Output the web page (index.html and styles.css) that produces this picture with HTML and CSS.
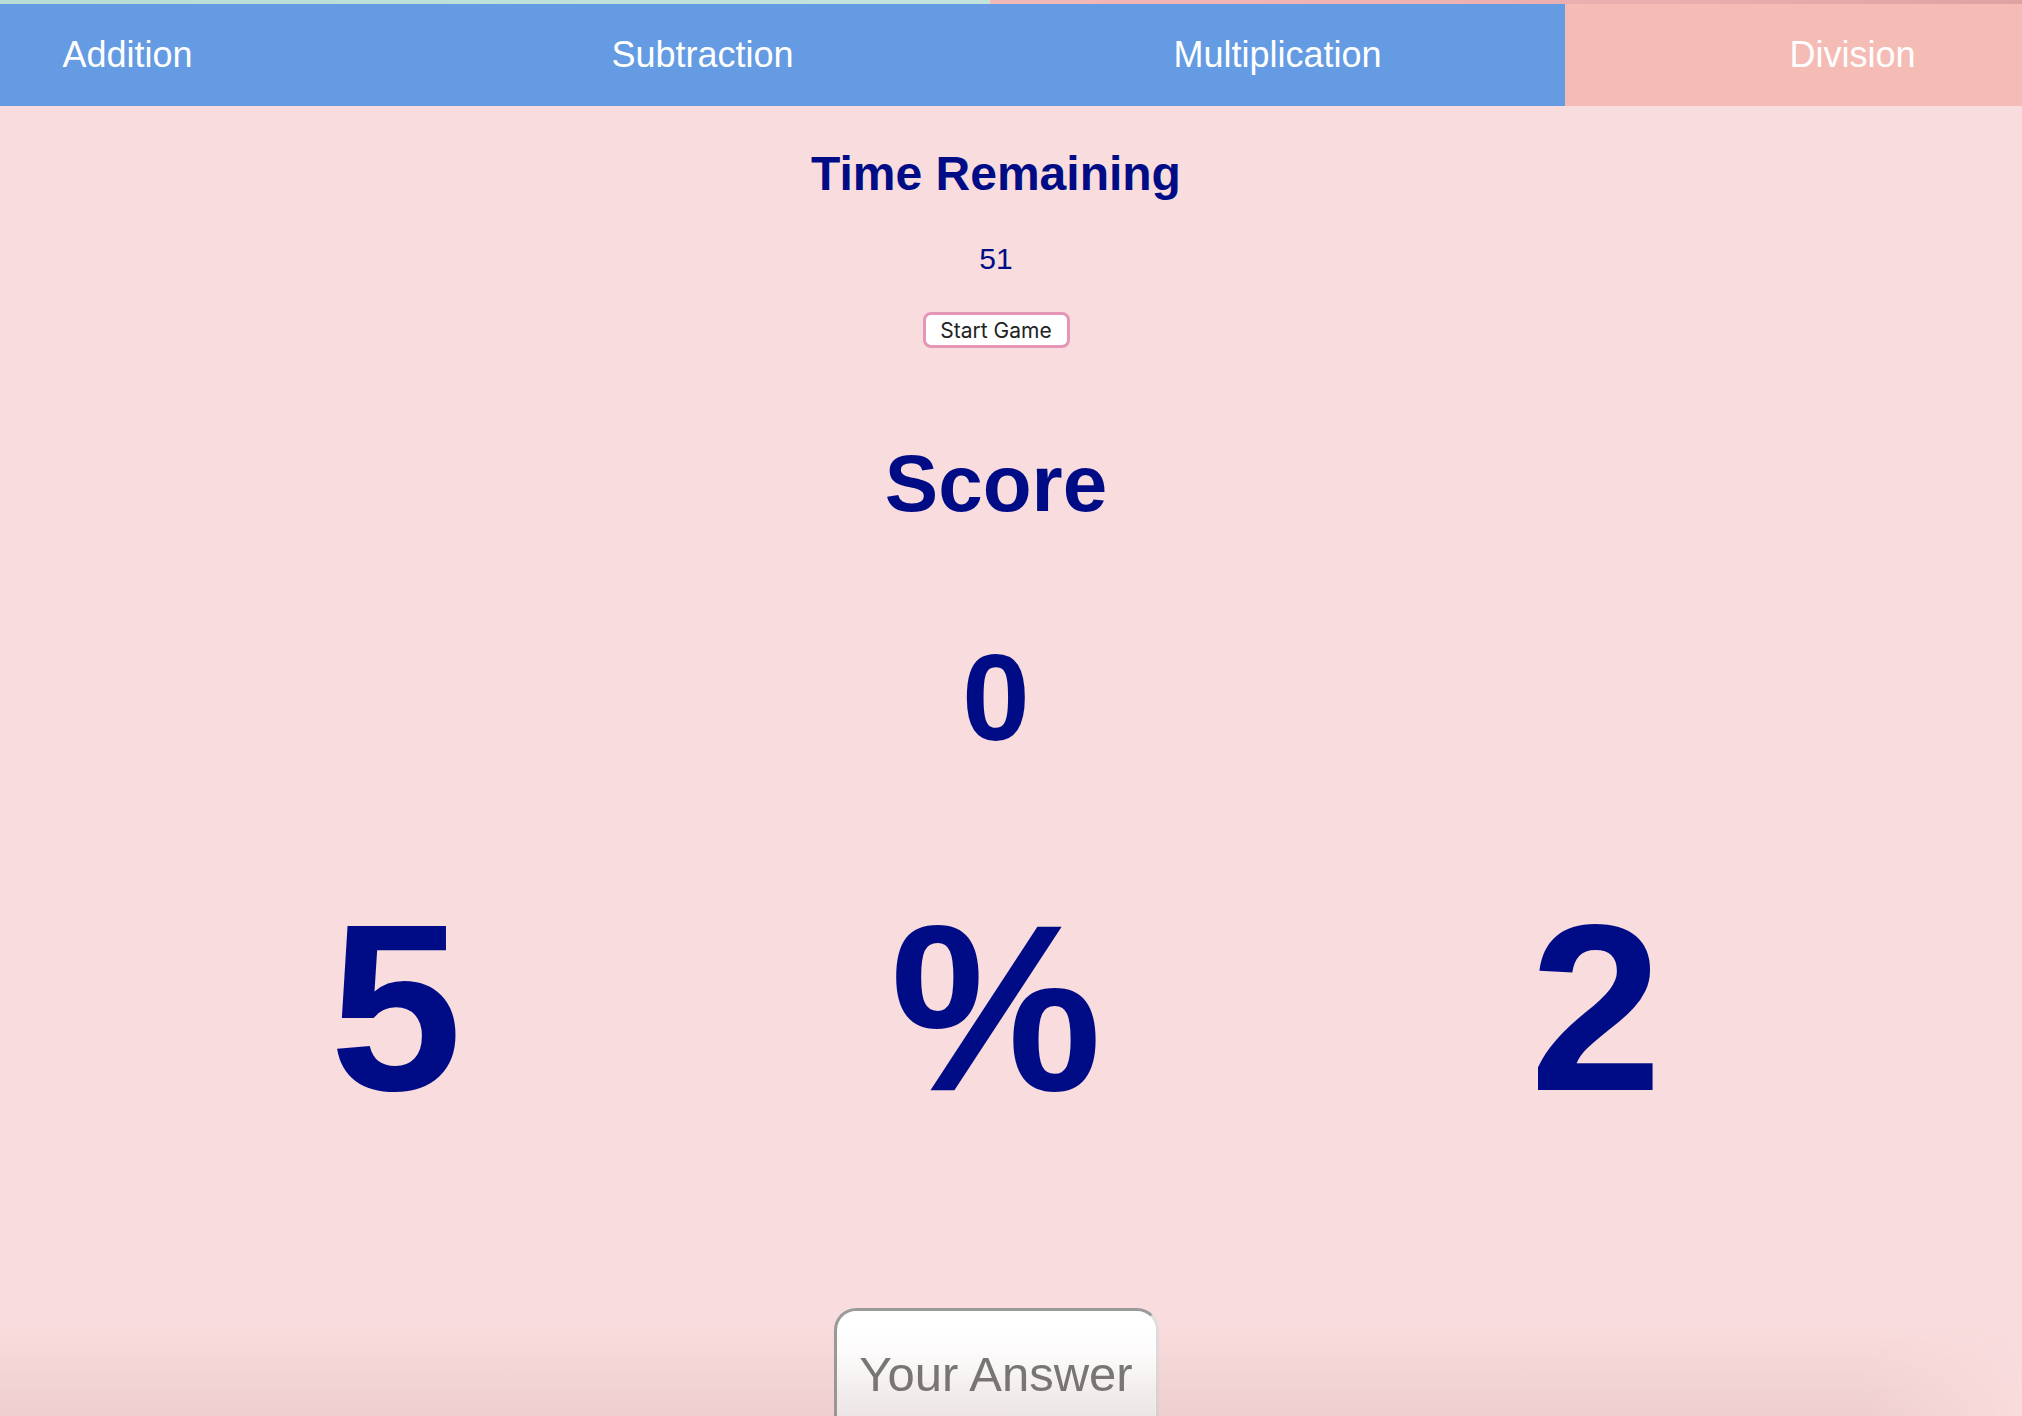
FILE: index.html
```html
<!DOCTYPE html>
<html lang="en">
<head>
<meta charset="utf-8">
<title>Math Game</title>
<link rel="stylesheet" href="styles.css">
</head>
<body>
<div class="strip"><span class="strip-left"></span><span class="strip-right"></span></div>
<nav class="nav">
  <a class="tab">Addition</a>
  <a class="tab">Subtraction</a>
  <a class="tab">Multiplication</a>
  <a class="tab tab-active">Division</a>
</nav>
<main class="main">
  <h1 class="title">Time Remaining</h1>
  <p class="timer">51</p>
  <button class="start">Start Game</button>
  <h2 class="score-title">Score</h2>
  <p class="score">0</p>
  <div class="problem">
    <span class="term">5</span>
    <span class="term">%</span>
    <span class="term">2</span>
  </div>
  <input class="answer" type="text" placeholder="Your Answer">
</main>
<div class="shade"></div>
</body>
</html>
```

FILE: styles.css
```css
html, body {
  margin: 0;
  padding: 0;
}
body {
  background: #f9dcdd;
  font-family: "Liberation Sans", Arial, sans-serif;
  color: #000c86;
  overflow: hidden;
  height: 1416px;
  position: relative;
}
.strip {
  display: flex;
  height: 4px;
}
.strip-left {
  width: 990px;
  background: linear-gradient(to right, #b8dcd5, #c3e4dc);
}
.strip-right {
  flex: 1;
  background: linear-gradient(to right, #f3b9b6, #e9adaf 70%, #dea2a5);
}
.nav {
  display: flex;
  height: 102px;
  margin-left: -160px;
}
.tab {
  flex: 0 0 575px;
  text-align: center;
  line-height: 102px;
  font-size: 36px;
  color: #ffffff;
  background: #659be2;
}
.tab-active {
  background: #f5bcb6;
}
.main {
  width: 1992px;
  display: flex;
  flex-direction: column;
  align-items: center;
  text-align: center;
}
.title {
  margin: 44px 0 0;
  font-size: 48px;
  line-height: 1;
  font-weight: bold;
}
.timer {
  margin: 46px 0 0;
  font-size: 30px;
  line-height: 1;
}
.start {
  margin: 38px 0 0;
  width: 147px;
  height: 36px;
  padding: 0;
  border: 3px solid #e596b7;
  border-radius: 8px;
  background: #ffffff;
  font-family: Inter, "Liberation Sans", sans-serif;
  font-size: 21px;
  color: #222222;
}
.score-title {
  margin: 96px 0 0;
  font-size: 80px;
  line-height: 1;
  font-weight: bold;
}
.score {
  margin: 113px 0 0;
  font-size: 122px;
  line-height: 1;
  font-weight: bold;
}
.problem {
  margin-top: 129px;
  display: grid;
  grid-template-columns: repeat(3, 600px);
  font-size: 238px;
  line-height: 240px;
  font-weight: bold;
}
.term {
  text-align: center;
}
.answer {
  margin-top: 180px;
  box-sizing: border-box;
  width: 325px;
  height: 132px;
  padding: 0 14px;
  border: 3px solid #9a9a9a;
  border-right-color: #dedede;
  border-radius: 22px;
  background: linear-gradient(to bottom, #ffffff 40%, #f2f2f2);
  font-family: "Liberation Sans", Arial, sans-serif;
  font-size: 49px;
  text-align: center;
  color: #333;
  outline: none;
}
.answer::placeholder {
  color: #767676;
}
.shade {
  position: absolute;
  left: 0;
  right: 0;
  bottom: 0;
  height: 90px;
  background: linear-gradient(to bottom, rgba(180, 120, 120, 0), rgba(170, 110, 110, 0.12));
  -webkit-mask-image: linear-gradient(to right, #000 92%, transparent);
  mask-image: linear-gradient(to right, #000 92%, transparent);
  pointer-events: none;
}
```
